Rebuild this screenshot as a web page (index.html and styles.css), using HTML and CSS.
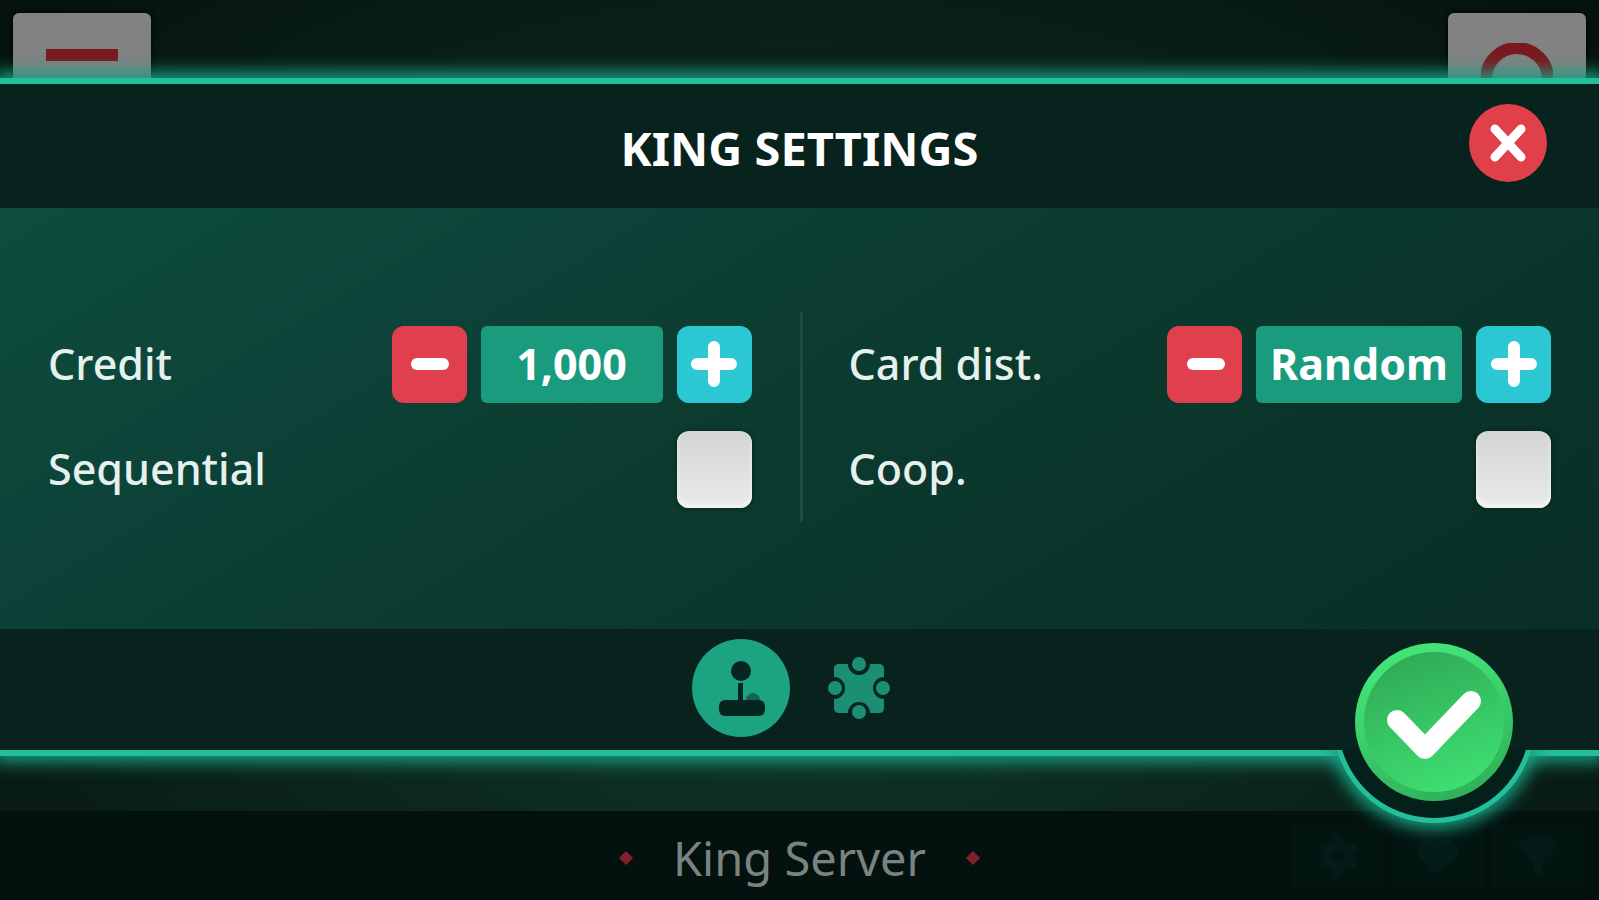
FILE: index.html
```html
<!DOCTYPE html>
<html lang="en">
<head>
  <meta charset="UTF-8" />
  <meta name="viewport" content="width=device-width, initial-scale=1" />
  <title>King Settings</title>
  <link rel="stylesheet" href="styles.css">
</head>
<body>
  <!-- Game table behind the dialog -->
  <div class="table">
    <div class="table-top">
      <button class="table-btn" type="button" aria-label="Menu">
        <svg viewBox="0 0 72 72"><path d="M0 12h72M0 43h72M0 66h72" /></svg>
      </button>
      <button class="table-btn" type="button" aria-label="Players">
        <svg viewBox="0 0 72 72"><circle cx="36" cy="36" r="31" /></svg>
      </button>
    </div>

    <footer class="server-bar">
      <div class="server-name">
        <span class="diamond"></span>
        <span>King Server</span>
        <span class="diamond"></span>
      </div>
      <div class="server-tools">
        <button type="button" aria-label="Options">
          <svg viewBox="0 0 48 48"><circle cx="24" cy="24" r="12" fill="none" stroke="currentColor" stroke-width="10" /><path d="M24 2v8M24 38v8M5 13l7 4M36 31l7 4M5 35l7-4M36 17l7-4" stroke="currentColor" stroke-width="9" /></svg>
        </button>
        <button type="button" aria-label="Favourites">
          <svg viewBox="0 0 48 48"><path d="M24 44L4 25C-3 12 12 0 24 10C36 0 51 12 44 25z" fill="currentColor" /></svg>
        </button>
        <button type="button" aria-label="Connection">
          <svg viewBox="0 0 48 48"><path d="M1 11Q24-5 47 11L28 32v12h-8V32z" fill="currentColor" /></svg>
        </button>
      </div>
    </footer>
  </div>

  <!-- Settings dialog -->
  <div class="overlay">
    <section class="panel" role="dialog" aria-labelledby="panel-title">
      <header class="panel-header">
        <h1 id="panel-title">KING SETTINGS</h1>
        <button class="close-btn" type="button" aria-label="Close">
          <svg viewBox="0 0 40 40"><path d="M7 6l26 28M33 6L7 34" /></svg>
        </button>
      </header>

      <form class="panel-body" id="settings">
        <div class="column">
          <div class="row">
            <label for="credit">Credit</label>
            <div class="stepper">
              <button class="step minus" type="button" aria-label="Less credit">
                <svg viewBox="0 0 48 48"><path d="M12 24h26" /></svg>
              </button>
              <output class="value" id="credit">1,000</output>
              <button class="step plus" type="button" aria-label="More credit">
                <svg viewBox="0 0 48 48"><path d="M7 24h34M24 7v34" /></svg>
              </button>
            </div>
          </div>
          <div class="row">
            <label for="sequential">Sequential</label>
            <input type="checkbox" id="sequential">
          </div>
        </div>

        <div class="column">
          <div class="row">
            <label for="card-dist">Card dist.</label>
            <div class="stepper">
              <button class="step minus" type="button" aria-label="Previous distribution">
                <svg viewBox="0 0 48 48"><path d="M12 24h26" /></svg>
              </button>
              <output class="value wide" id="card-dist">Random</output>
              <button class="step plus" type="button" aria-label="Next distribution">
                <svg viewBox="0 0 48 48"><path d="M7 24h34M24 7v34" /></svg>
              </button>
            </div>
          </div>
          <div class="row">
            <label for="coop">Coop.</label>
            <input type="checkbox" id="coop">
          </div>
        </div>
      </form>

      <nav class="panel-tabs">
        <button class="tab active" type="button" aria-label="Game">
          <svg viewBox="0 0 98 98">
            <circle cx="49" cy="32" r="10" />
            <path d="M46 44h5v19h-5z" />
            <path d="M54 61c0-9 14-9 14 0z" opacity="0.5" />
            <rect x="27" y="61" width="46" height="16" rx="6" />
          </svg>
        </button>
        <button class="tab" type="button" aria-label="Extras">
          <svg viewBox="0 0 98 98">
            <path d="M29 25h9a11 11 0 0 0 22 0h9q5 0 5 5v8a11 11 0 0 0 0 22v9q0 5-5 5h-9a11 11 0 0 0-22 0h-9q-5 0-5-5v-9a11 11 0 0 0 0-22v-8q0-5 5-5z" />
            <circle cx="49" cy="25" r="7" />
            <circle cx="49" cy="73" r="7" />
            <circle cx="25" cy="49" r="7" />
            <circle cx="73" cy="49" r="7" />
          </svg>
        </button>
      </nav>

      <div class="notch"></div>
      <button class="ok-btn" type="submit" form="settings" aria-label="Confirm">
        <svg viewBox="0 0 158 158"><path d="M42 77l28 29L116 58" /></svg>
      </button>
    </section>
  </div>
</body>
</html>
```
FILE: styles.css
```css
* {
  box-sizing: border-box;
}

body {
  margin: 0;
  background: #03120e;
  color: #e6f1ed;
  font-family: "Noto Sans", "Open Sans", sans-serif;
  overflow: hidden;
}

button {
  border: none;
  padding: 0;
  background: none;
  cursor: pointer;
}

svg {
  display: block;
}

/* Game table */
.table {
  display: flex;
  flex-direction: column;
  justify-content: space-between;
  min-height: 100vh;
  background: radial-gradient(ellipse at 50% 60%, #124033 0%, #0c261d 50%, #05120e 100%);
}

.table-top {
  display: flex;
  justify-content: space-between;
  padding: 13px;
}

.table-btn {
  display: flex;
  align-items: center;
  justify-content: center;
  width: 138px;
  height: 132px;
  border-radius: 6px;
  background: #828282;
  box-shadow: 0 0 6px #000;
}

.table-btn svg {
  width: 72px;
  height: 72px;
  fill: none;
  stroke: #7a1a1f;
  stroke-width: 12;
}

.server-bar {
  display: grid;
  grid-template-columns: 1fr auto 1fr;
  align-items: center;
  height: 89px;
  padding: 0 16px;
  background: #03120e;
}

.server-name {
  grid-column: 2;
  display: flex;
  align-items: center;
  gap: 42px;
  padding-top: 4px;
  color: #7b8381;
  font-size: 47px;
  line-height: 64px;
}

.diamond {
  width: 10px;
  height: 10px;
  background: #83202a;
  transform: rotate(45deg);
}

.server-tools {
  justify-self: end;
  display: flex;
  gap: 10px;
}

.server-tools button {
  display: flex;
  align-items: center;
  justify-content: center;
  width: 90px;
  height: 64px;
  background: #031511;
  color: #041c17;
}

.server-tools svg {
  width: 44px;
  height: 44px;
}

/* Dialog */
.overlay {
  position: absolute;
  inset: 0;
  display: flex;
  padding: 78px 0 144px;
}

.panel {
  position: relative;
  flex: 1;
  display: flex;
  flex-direction: column;
  border-top: 6px solid #22bf9b;
  border-bottom: 6px solid #22bf9b;
  background: #08231e;
  box-shadow: 0 0 16px 6px #1a9f80;
}

.panel-header {
  display: grid;
  grid-template-columns: 1fr auto 1fr;
  align-items: start;
  height: 124px;
  padding: 20px 52px 0;
}

.panel-header h1 {
  grid-column: 2;
  margin: 0;
  color: #fff;
  font-size: 47px;
  line-height: 88px;
  font-weight: 700;
}

.close-btn {
  justify-self: end;
  display: flex;
  align-items: center;
  justify-content: center;
  width: 78px;
  height: 78px;
  border-radius: 50%;
  background: #e0404a;
}

.close-btn svg {
  width: 40px;
  height: 40px;
  fill: none;
  stroke: #fff;
  stroke-width: 9;
  stroke-linecap: round;
}

.panel-body {
  flex: 1;
  display: grid;
  grid-template-columns: 1fr 1fr;
  align-content: center;
  padding-bottom: 4px;
  background: linear-gradient(149deg, #0d4e3b 0%, #0d4239 28%, #0c3e31 38%, #0a342a 75%, #0a2f27 100%);
}

.column {
  display: flex;
  flex-direction: column;
  gap: 28px;
  padding: 14px 48px;
}

.column + .column {
  padding-left: 46px;
  border-left: 3px solid #1e4c40;
}

.row {
  display: flex;
  align-items: center;
  justify-content: space-between;
  height: 77px;
  font-size: 43px;
  line-height: 60px;
  font-weight: 500;
}

.stepper {
  display: flex;
  gap: 14px;
}

.step {
  display: flex;
  align-items: center;
  justify-content: center;
  width: 75px;
  height: 77px;
  border-radius: 12px;
}

.step svg {
  width: 48px;
  height: 48px;
  fill: none;
  stroke: #fff;
  stroke-width: 12;
  stroke-linecap: round;
}

.minus {
  background: #e0404e;
}

.plus {
  background: #2bc8d4;
}

.value {
  display: flex;
  align-items: center;
  justify-content: center;
  width: 182px;
  border-radius: 6px;
  background: #1a9b7d;
  color: #fff;
  font-weight: 700;
}

.value.wide {
  width: 206px;
}

input[type="checkbox"] {
  appearance: none;
  width: 75px;
  height: 77px;
  margin: 0;
  border-radius: 12px;
  background: linear-gradient(#d2d5d4, #e8ebea);
  box-shadow: 0 0 4px #03211a, inset 0 -4px 4px #f4f4f4;
}

input[type="checkbox"]:checked {
  background: #2bc8d4;
}

/* Tabs along the bottom */
.panel-tabs {
  display: flex;
  align-items: center;
  justify-content: center;
  gap: 20px;
  height: 121px;
  padding-bottom: 4px;
}

.tab {
  width: 98px;
  height: 98px;
  border-radius: 50%;
  fill: #1a8f74;
}

.tab.active {
  background: #1ba382;
  fill: #07251f;
}

/* Ring that bulges out of the lower edge, clipped to the part below it */
.notch {
  position: absolute;
  right: 64px;
  bottom: -73px;
  width: 202px;
  height: 202px;
  border: 5px solid #22bf9b;
  border-radius: 50%;
  background: #04201b;
  box-shadow: 0 0 16px 6px #1a9f80;
  clip-path: inset(129px -30px -30px -30px);
}

.ok-btn {
  position: absolute;
  right: 86px;
  bottom: -51px;
  width: 158px;
  height: 158px;
  border-radius: 50%;
  background:
    linear-gradient(160deg, #30ac56 10%, #3edf72 90%) padding-box,
    linear-gradient(160deg, #42e277 20%, #30b058 90%) border-box;
  border: 9px solid transparent;
}

.ok-btn svg {
  width: 158px;
  height: 158px;
  margin: -9px;
  fill: none;
  stroke: #fff;
  stroke-width: 20;
  stroke-linecap: round;
  stroke-linejoin: round;
}
```
